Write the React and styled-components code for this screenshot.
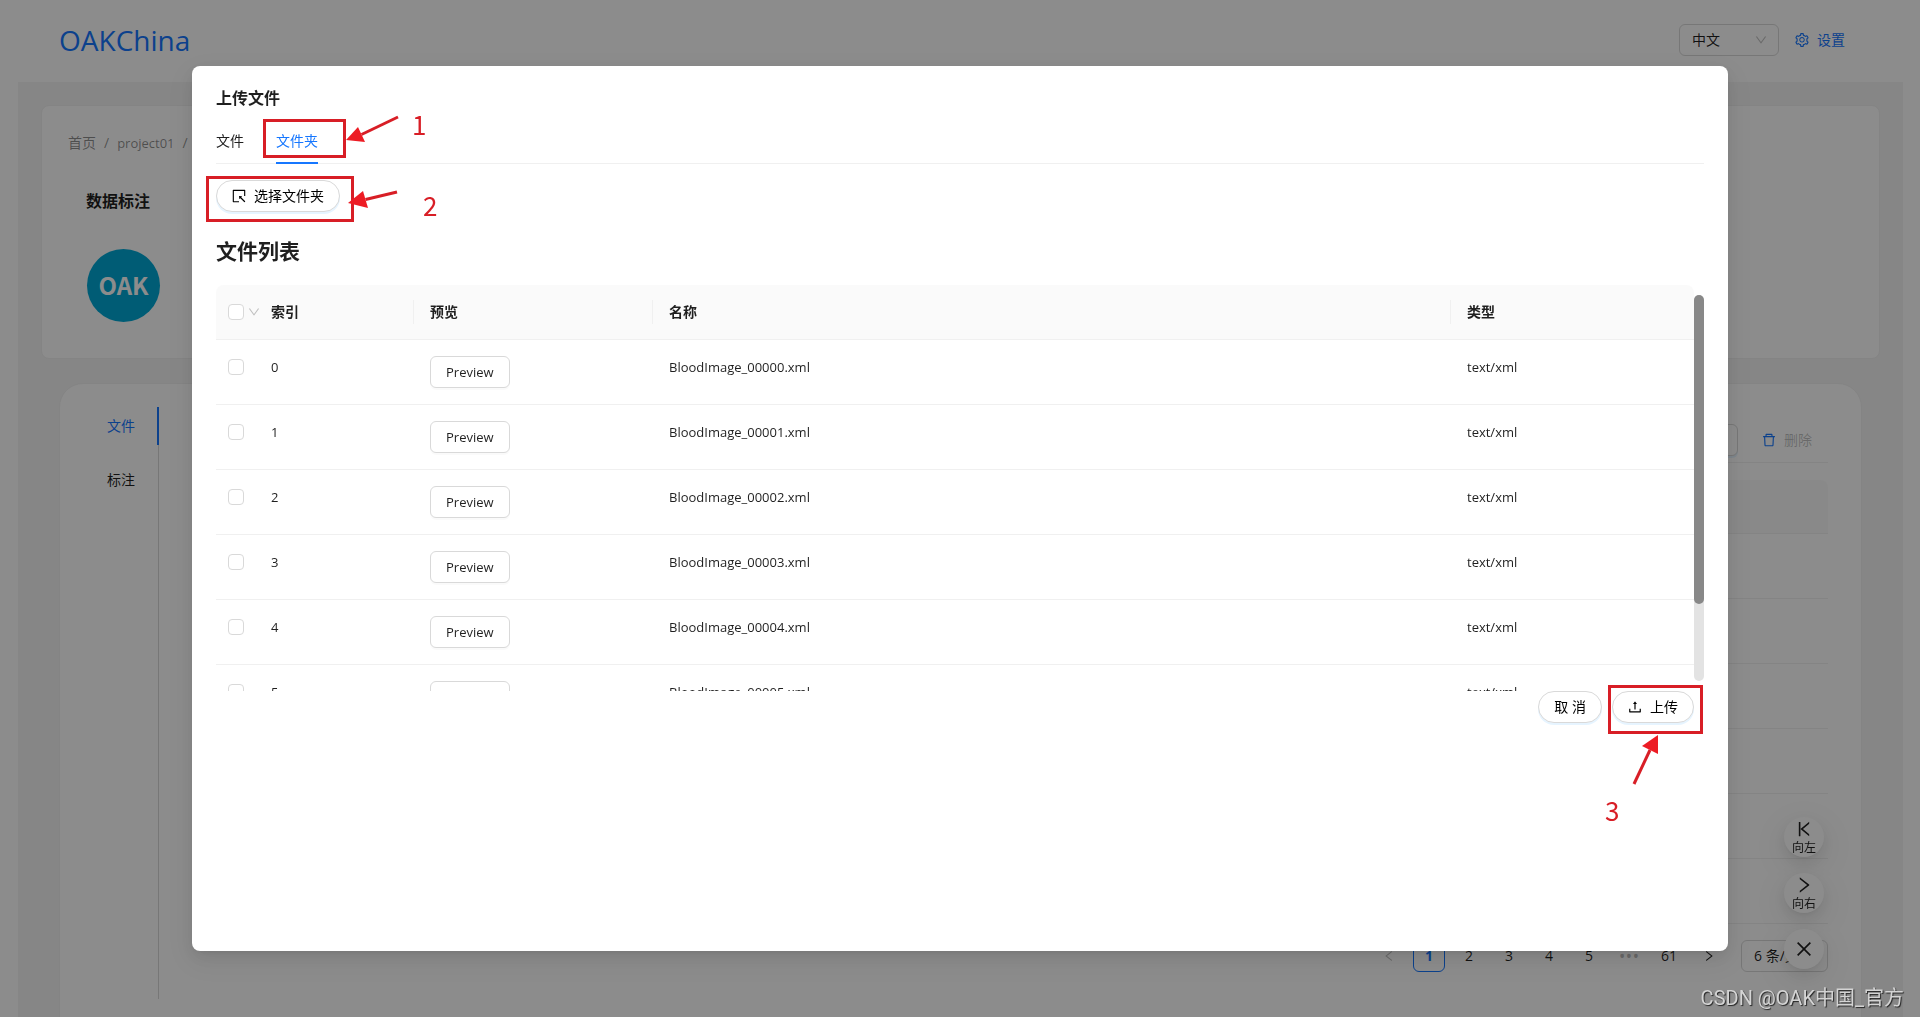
import React, { useId } from "react";
import styled, { createGlobalStyle, css } from "styled-components";
import {
  AiOutlineClose,
  AiOutlineDelete,
  AiOutlineDown,
  AiOutlineLeft,
  AiOutlineRight,
  AiOutlineSelect,
  AiOutlineSetting,
  AiOutlineUpload,
  AiOutlineVerticalRight,
} from "react-icons/ai";

const color = {
  primary: "#1677ff",
  text: "rgba(0, 0, 0, 0.88)",
  muted: "rgba(0, 0, 0, 0.45)",
  disabled: "rgba(0, 0, 0, 0.25)",
  border: "#d9d9d9",
  split: "#f0f0f0",
  mark: "#d81e26",
  arrow: "#ed1c24",
};

const floatShadow =
  "0 6px 16px 0 rgba(0,0,0,0.08), 0 3px 6px -4px rgba(0,0,0,0.12), 0 9px 28px 8px rgba(0,0,0,0.05)";

const GlobalStyle = createGlobalStyle`
  *, *::before, *::after { box-sizing: border-box; }
  body {
    margin: 0;
    background: #fff;
    color: ${color.text};
    font-family: "Open Sans", "Noto Sans CJK SC", sans-serif;
    font-size: 14px;
    line-height: 22px;
  }
  button, select, input { font: inherit; color: inherit; }
  button { cursor: pointer; }
  h1, h2, h3 { margin: 0; }
  a { text-decoration: none; }
  svg { flex: none; display: block; }
`;

/* ---------- page behind the dialog ---------- */

const Page = styled.div`
  height: 100vh;
  overflow: hidden;
`;

const Header = styled.header`
  display: flex;
  align-items: center;
  justify-content: space-between;
  height: 82px;
  padding: 0 75px 2px 59px;
`;

const Brand = styled.a`
  color: ${color.primary};
  font-size: 28px;
  line-height: 40px;
`;

const HeaderTools = styled.div`
  display: flex;
  align-items: center;
  gap: 16px;
`;

const SelectBox = styled.div`
  display: grid;
  align-items: center;
  width: ${(p) => p.$width}px;
  > * {
    grid-area: 1 / 1;
  }
  > svg {
    justify-self: end;
    margin-right: 12px;
    color: ${color.disabled};
    pointer-events: none;
  }
`;

const NativeSelect = styled.select`
  appearance: none;
  width: 100%;
  height: 32px;
  padding: 0 12px;
  border: 1px solid ${color.border};
  border-radius: 6px;
  background: #fff;
`;

const SettingsLink = styled.a`
  display: flex;
  align-items: center;
  gap: 8px;
  color: ${color.primary};
`;

const Main = styled.main`
  display: flex;
  flex-direction: column;
  gap: 24px;
  margin: 0 17px 0 18px;
  padding: 23px;
  background: #f5f5f5;
`;

const ProjectCard = styled.section`
  padding: 26px 26px 36px;
  border: 1px solid ${color.split};
  border-radius: 8px;
  background: #fff;
`;

const Breadcrumb = styled.nav`
  display: flex;
  gap: 8px;
  color: ${color.muted};
`;

const Crumb = styled.a`
  color: inherit;
  font-size: ${(p) => (p.$latin ? 13 : 14)}px;
`;

const ProjectInfo = styled.div`
  padding: 35px 18px 0;
`;

const ProjectTitle = styled.h2`
  font-size: 16px;
  line-height: 24px;
`;

const Avatar = styled.div`
  display: grid;
  place-items: center;
  width: 73px;
  height: 73px;
  margin: 36px 0 0 1px;
  padding-bottom: 2px;
  border-radius: 50%;
  background: #00a8d6;
  color: #fff;
  font-family: "Noto Sans CJK SC", sans-serif;
  font-size: 24px;
  font-weight: 700;
`;

const DataCard = styled.section`
  display: flex;
  gap: 36px;
  margin: 0 18px;
  padding: 23px 33px 54px 23px;
  border: 1px solid ${color.split};
  border-radius: 24px;
  background: #fff;
`;

const SideTabs = styled.div`
  display: flex;
  flex-direction: column;
  gap: 16px;
  min-height: 592px;
  border-right: 1px solid ${color.border};
`;

const SideTab = styled.button`
  margin-right: -1px;
  padding: 8px 22px 8px 24px;
  border: 0;
  border-right: 2px solid ${(p) => (p.$active ? color.primary : "transparent")};
  background: none;
  color: ${(p) => (p.$active ? color.primary : color.text)};
`;

const DataPanel = styled.div`
  flex: 1;
  padding-top: 17px;
`;

const DataToolbar = styled.div`
  display: flex;
  justify-content: flex-end;
  gap: 8px;
  padding-bottom: 6px;
  border-bottom: 1px solid ${color.split};
`;

const ToolbarButton = styled.button`
  width: 88px;
  height: 32px;
  border: 1px solid ${color.border};
  border-radius: 6px;
  background: #fff;
  box-shadow: 0 2px 0 rgba(5, 145, 255, 0.1);
`;

const DeleteButton = styled.button`
  display: flex;
  align-items: center;
  gap: 8px;
  height: 32px;
  padding: 0 16px;
  border: 0;
  background: none;
  color: ${color.disabled};
  svg {
    color: ${color.primary};
  }
`;

const DataHead = styled.div`
  height: 54px;
  margin-top: 17px;
  border-bottom: 1px solid ${color.split};
  border-radius: 8px 8px 0 0;
  background: #fafafa;
`;

const DataRow = styled.div`
  height: 65px;
  border-bottom: 1px solid ${color.split};
`;

const Pagination = styled.nav`
  display: flex;
  justify-content: flex-end;
  gap: 8px;
  padding-top: 16px;
  ${SelectBox} {
    margin-left: 8px;
  }
`;

const PageButton = styled.button`
  display: grid;
  place-items: center;
  width: 32px;
  height: 32px;
  padding: 0;
  border: 1px solid transparent;
  border-radius: 6px;
  background: none;
  ${(p) =>
    p.$current &&
    css`
      border-color: ${color.primary};
      color: ${color.primary};
      font-weight: 700;
    `}
  &:disabled {
    color: ${color.disabled};
  }
`;

const PageGap = styled.span`
  width: 32px;
  color: ${color.disabled};
  font-size: 18px;
  line-height: 32px;
  text-align: center;
`;

const FloatGroup = styled.div`
  position: fixed;
  right: 96px;
  bottom: 48px;
  display: flex;
  flex-direction: column;
  gap: 16px;
`;

const FloatButton = styled.button`
  display: flex;
  flex-direction: column;
  align-items: center;
  justify-content: center;
  width: 40px;
  height: 40px;
  padding: ${(p) => (p.$labelled ? "4px 0 0" : "0")};
  border: 0;
  border-radius: 50%;
  background: #fff;
  box-shadow: ${floatShadow};
  font-size: 12px;
  line-height: 20px;
  white-space: nowrap;
`;

/* ---------- dialog ---------- */

const Mask = styled.div`
  position: fixed;
  inset: 0;
  display: flex;
  align-items: center;
  justify-content: center;
  background: rgba(0, 0, 0, 0.45);
`;

const Dialog = styled.div`
  width: 80%;
  height: calc(100vh - 132px);
  padding: 20px 24px;
  border-radius: 8px;
  background: #fff;
  box-shadow: ${floatShadow};
`;

const DialogTitle = styled.h2`
  margin-bottom: 8px;
  font-size: 16px;
  line-height: 24px;
`;

const Tabs = styled.div`
  display: flex;
  gap: 32px;
  margin-bottom: 16px;
  border-bottom: 1px solid ${color.split};
`;

const Tab = styled.button`
  margin-bottom: -1px;
  padding: 12px 0 10px;
  border: 0;
  border-bottom: 2px solid ${(p) => (p.$active ? color.primary : "transparent")};
  background: none;
  color: ${(p) => (p.$active ? color.primary : color.text)};
`;

const Anchor = styled.div`
  position: relative;
  display: flex;
  width: fit-content;
`;

const PillButton = styled.button`
  display: flex;
  align-items: center;
  gap: 8px;
  height: 32px;
  padding: 0 15px;
  border: 1px solid ${color.border};
  border-radius: 16px;
  background: #fff;
  color: #000;
  box-shadow: 0 2px 0 rgba(5, 145, 255, 0.1);
`;

const ListTitle = styled.h3`
  margin: 24px 0 18px;
  font-size: 21px;
  line-height: 31px;
`;

const TableArea = styled.div`
  display: flex;
  height: 406px;
`;

const TableClip = styled.div`
  flex: 1;
  overflow: hidden;
`;

const ScrollTrack = styled.div`
  width: 10px;
  margin: 10px 0;
  border-radius: 5px;
  background: #e3e3e3;
`;

const ScrollThumb = styled.div`
  width: 10px;
  border-radius: 5px;
  background: #888;
`;

const FileTable = styled.table`
  width: 100%;
  table-layout: fixed;
  border-collapse: separate;
  border-spacing: 0;
`;

const Column = styled.col`
  width: ${(p) => (p.$width ? `${p.$width}px` : "auto")};
`;

const HeadCell = styled.th`
  padding: 16px;
  border-bottom: 1px solid ${color.split};
  background: #fafafa
    ${(p) =>
      p.$divided &&
      css`linear-gradient(${color.split}, ${color.split}) right center / 1px 24px no-repeat`};
  text-align: left;
  white-space: nowrap;
  &:first-child {
    padding: 16px 0 16px 12px;
    border-top-left-radius: 8px;
  }
  &:last-child {
    border-top-right-radius: 8px;
  }
`;

const Cell = styled.td`
  height: 65px;
  padding: 16px;
  border-bottom: 1px solid ${color.split};
  font-size: 13px;
  vertical-align: top;
  &:first-child {
    padding: 16px 0 16px 12px;
  }
`;

const CheckWrap = styled.div`
  display: flex;
  align-items: center;
  gap: 4px;
  height: 22px;
  > svg {
    color: #bfbfbf;
  }
`;

const Checkbox = styled.input`
  appearance: none;
  flex: none;
  width: 16px;
  height: 16px;
  margin: 0;
  border: 1px solid ${color.border};
  border-radius: 4px;
  background: #fff;
`;

const PreviewButton = styled.button`
  display: block;
  height: 32px;
  padding: 0 15px;
  border: 1px solid ${color.border};
  border-radius: 6px;
  background: #fff;
  box-shadow: 0 2px 0 rgba(0, 0, 0, 0.02);
`;

const DialogFooter = styled.footer`
  display: flex;
  justify-content: flex-end;
  gap: 10px;
  padding-right: 10px;
`;

/* ---------- step marks drawn over the page ---------- */

const MarkFrame = styled.span`
  position: absolute;
  inset: ${(p) => p.$inset};
  border: 3px solid ${color.mark};
  pointer-events: none;
`;

const MarkArrow = styled.svg`
  position: absolute;
  left: ${(p) => p.$x}px;
  top: ${(p) => p.$y}px;
  overflow: visible;
  pointer-events: none;
`;

const MarkNumber = styled.span`
  position: absolute;
  left: ${(p) => p.$x}px;
  top: ${(p) => p.$y}px;
  color: ${color.mark};
  font-family: "Noto Sans CJK SC", sans-serif;
  font-size: 26px;
  line-height: 26px;
  pointer-events: none;
`;

const Watermark = styled.div`
  position: fixed;
  right: 16px;
  bottom: 5px;
  color: #d4d4d4;
  font-family: Roboto, "Noto Sans CJK SC", sans-serif;
  font-size: 20px;
  line-height: 28px;
  text-shadow: 1px 1px 1px rgba(0, 0, 0, 0.75);
`;

/* The Ant glyphs are drawn without the empty margin of their 1024 grid. */
function Icon({ as: Glyph, size = 14 }) {
  return <Glyph size={size} viewBox="64 64 896 896" aria-hidden="true" />;
}

function Arrow({ x, y, tail, head }) {
  return (
    <MarkArrow $x={x} $y={y} width="1" height="1" aria-hidden="true">
      <line
        x1={tail[0]}
        y1={tail[1]}
        x2={(head[0][0] + head[1][0]) / 2}
        y2={(head[0][1] + head[1][1]) / 2}
        stroke={color.mark}
        strokeWidth="3"
      />
      <polygon points={`0,0 ${head[0]} ${head[1]}`} fill={color.arrow} />
    </MarkArrow>
  );
}

function Select({ label, width, children }) {
  const id = useId();
  return (
    <SelectBox $width={width}>
      <NativeSelect id={id} aria-label={label}>
        {children}
      </NativeSelect>
      <Icon as={AiOutlineDown} size={12} />
    </SelectBox>
  );
}

const files = [0, 1, 2, 3, 4, 5].map((index) => ({
  index,
  name: `BloodImage_0000${index}.xml`,
  type: "text/xml",
}));

function UploadDialog() {
  return (
    <Dialog role="dialog" aria-modal="true" aria-labelledby="upload-title">
      <DialogTitle id="upload-title">上传文件</DialogTitle>
      <Tabs role="tablist">
        <Tab role="tab" aria-selected="false">
          文件
        </Tab>
        <Anchor>
          <Tab role="tab" aria-selected="true" $active>
            文件夹
          </Tab>
          <MarkFrame $inset="1px -28px 5px -13px" />
          <Arrow x={70} y={22} tail={[52, -23]} head={[[12, -13], [19, 2]]} />
          <MarkNumber $x={136} $y={-7}>
            1
          </MarkNumber>
        </Anchor>
      </Tabs>

      <Anchor>
        <PillButton>
          <Icon as={AiOutlineSelect} />
          选择文件夹
        </PillButton>
        <MarkFrame $inset="-4px -14px -10px -10px" />
        <Arrow x={132} y={23} tail={[49, -11]} head={[[15, -12], [20, 5]]} />
        <MarkNumber $x={207} $y={12}>
          2
        </MarkNumber>
      </Anchor>

      <ListTitle>文件列表</ListTitle>
      <TableArea>
        <TableClip>
          <FileTable>
            <colgroup>
              <Column $width={39} />
              <Column $width={159} />
              <Column $width={239} />
              <Column />
              <Column $width={243} />
            </colgroup>
            <thead>
              <tr>
                <HeadCell>
                  <CheckWrap>
                    <Checkbox type="checkbox" aria-label="全选" />
                    <Icon as={AiOutlineDown} size={12} />
                  </CheckWrap>
                </HeadCell>
                <HeadCell $divided>索引</HeadCell>
                <HeadCell $divided>预览</HeadCell>
                <HeadCell $divided>名称</HeadCell>
                <HeadCell>类型</HeadCell>
              </tr>
            </thead>
            <tbody>
              {files.map((file) => (
                <tr key={file.index}>
                  <Cell>
                    <CheckWrap>
                      <Checkbox type="checkbox" aria-label={file.name} />
                    </CheckWrap>
                  </Cell>
                  <Cell>{file.index}</Cell>
                  <Cell>
                    <PreviewButton>Preview</PreviewButton>
                  </Cell>
                  <Cell>{file.name}</Cell>
                  <Cell>{file.type}</Cell>
                </tr>
              ))}
            </tbody>
          </FileTable>
        </TableClip>
        <ScrollTrack>
          <ScrollThumb style={{ height: "80%" }} />
        </ScrollTrack>
      </TableArea>

      <DialogFooter>
        <PillButton>取 消</PillButton>
        <Anchor>
          <PillButton>
            <Icon as={AiOutlineUpload} />
            上传
          </PillButton>
          <MarkFrame $inset="-6px -9px -11px -4px" />
          <Arrow x={46} y={44} tail={[-24, 49]} head={[[-16, 11], [0, 19]]} />
          <MarkNumber $x={-7} $y={106}>
            3
          </MarkNumber>
        </Anchor>
      </DialogFooter>
    </Dialog>
  );
}

export default function App() {
  return (
    <>
      <GlobalStyle />
      <Page>
        <Header>
          <Brand href="#">OAKChina</Brand>
          <HeaderTools>
            <Select label="语言" width={100}>
              <option>中文</option>
            </Select>
            <SettingsLink href="#settings">
              <Icon as={AiOutlineSetting} />
              设置
            </SettingsLink>
          </HeaderTools>
        </Header>

        <Main>
          <ProjectCard>
            <Breadcrumb>
              <Crumb href="#home">首页</Crumb>
              <span>/</span>
              <Crumb href="#project01" $latin>
                project01
              </Crumb>
              <span>/</span>
            </Breadcrumb>
            <ProjectInfo>
              <ProjectTitle>数据标注</ProjectTitle>
              <Avatar>OAK</Avatar>
            </ProjectInfo>
          </ProjectCard>

          <DataCard>
            <SideTabs role="tablist">
              <SideTab role="tab" $active>
                文件
              </SideTab>
              <SideTab role="tab">标注</SideTab>
            </SideTabs>
            <DataPanel>
              <DataToolbar>
                <ToolbarButton aria-label="上传" />
                <DeleteButton>
                  <Icon as={AiOutlineDelete} />
                  删除
                </DeleteButton>
              </DataToolbar>
              <DataHead />
              {files.map((file) => (
                <DataRow key={file.index} />
              ))}
              <Pagination>
                <PageButton disabled aria-label="上一页">
                  <Icon as={AiOutlineLeft} size={12} />
                </PageButton>
                <PageButton $current>1</PageButton>
                <PageButton>2</PageButton>
                <PageButton>3</PageButton>
                <PageButton>4</PageButton>
                <PageButton>5</PageButton>
                <PageGap>•••</PageGap>
                <PageButton>61</PageButton>
                <PageButton aria-label="下一页">
                  <Icon as={AiOutlineRight} size={12} />
                </PageButton>
                <Select label="每页条数" width={87}>
                  <option>6 条/页</option>
                </Select>
              </Pagination>
            </DataPanel>
          </DataCard>
        </Main>

        <FloatGroup>
          <FloatButton $labelled>
            <Icon as={AiOutlineVerticalRight} size={18} />
            向左
          </FloatButton>
          <FloatButton $labelled>
            <Icon as={AiOutlineRight} size={18} />
            向右
          </FloatButton>
          <FloatButton aria-label="关闭">
            <Icon as={AiOutlineClose} size={18} />
          </FloatButton>
        </FloatGroup>
      </Page>

      <Mask>
        <UploadDialog />
      </Mask>
      <Watermark>CSDN @OAK中国_官方</Watermark>
    </>
  );
}
